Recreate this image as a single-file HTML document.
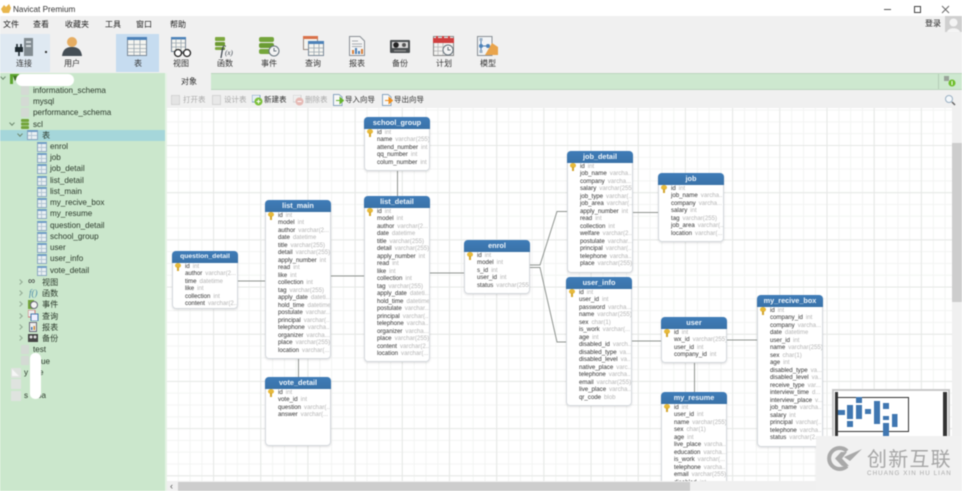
<!DOCTYPE html>
<html lang="zh"><head><meta charset="utf-8"><title>Navicat Premium</title>
<style>
html,body{margin:0;padding:0;width:962px;height:491px;overflow:hidden;background:#fff}
body{font-family:"Liberation Sans","Noto Sans CJK SC",sans-serif;color:#333}
#a{position:relative;width:962px;height:491px;overflow:hidden;filter:blur(.45px)}
.x{position:absolute}
.m{position:absolute;top:20px;font-size:8px;line-height:10px;color:#222}
.l{position:absolute;top:59px;width:44px;text-align:center;font-size:8px;line-height:10px;color:#333}
.ic{position:absolute;top:35px}
.s{position:absolute;font-size:8.1px;line-height:11px;color:#2c3a2c;white-space:nowrap}
.ti{position:absolute;left:37px;width:10px;height:10px;background:#e9f0f3;border:1px solid #8ba7c0;box-sizing:border-box;background-image:linear-gradient(#b5c6d5,#b5c6d5),linear-gradient(#b5c6d5,#b5c6d5);background-size:100% 1px,1px 100%;background-position:0 3px,3px 0;background-repeat:no-repeat;border-top:2px solid #6f9cc6}
.d{position:absolute;left:21px;width:8px;height:9px;background:#d4dad4}
.c{position:absolute;width:3px;height:3px;border-right:1.2px solid #6f8a70;border-bottom:1.2px solid #6f8a70;transform:rotate(45deg)}
.r{transform:rotate(-45deg);border-color:#93aa94}
.b{position:absolute;font-size:7.5px;line-height:10px;white-space:nowrap}
.g{color:#aaa}.k{color:#333}
.t{position:absolute;width:66px;background:#fff;box-sizing:border-box;border-radius:4px;overflow:hidden;box-shadow:inset 0 0 0 1px #d5d9dd,0 1px 2px rgba(0,0,0,.12)}
.t h4{margin:0;height:11.5px;line-height:11.5px;background:linear-gradient(#3f7cb8,#3a72a8);color:#eef5fb;font-size:7.3px;font-weight:bold;text-align:center}
.t p{margin:0 1px 0 0;padding-left:13px;height:7.5px;line-height:7.5px;font-size:6.1px;color:#333;white-space:nowrap;overflow:hidden}
.t p span{color:#b4b4b4;margin-left:3px}
.key{position:absolute;left:3px;top:11.5px;width:6px;height:5px;background:#e7b93a;border-radius:50%}
.key:after{content:"";position:absolute;left:2px;top:4px;width:2px;height:4px;background:#d3a52c}
</style></head><body><div id="a">

<!-- title bar -->
<div class="x" style="left:0;top:0;width:962px;height:16px;background:#fff"></div>
<svg class="x" style="left:0;top:3px" width="12" height="11"><path d="M1 6 L4 2 L6 4 L9 1 L11 5 L9 10 H3Z" fill="#e8b64c"/></svg>
<div class="x" style="left:13px;top:4px;font-size:8.2px;line-height:11px;color:#333">Navicat Premium</div>
<div class="x" style="left:884px;top:9px;width:7px;height:1px;background:#555"></div>
<div class="x" style="left:914px;top:6px;width:5px;height:5px;border:1px solid #444"></div>
<svg class="x" style="left:941px;top:5px" width="9" height="9"><path d="M1 1L8 8M8 1L1 8" stroke="#666" stroke-width=".9"/></svg>

<!-- menu + toolbar -->
<div class="x" style="left:0;top:16px;width:962px;height:57px;background:#f0f0f0"></div>
<div class="m" style="left:3px">文件</div><div class="m" style="left:33px">查看</div><div class="m" style="left:65px">收藏夹</div><div class="m" style="left:105px">工具</div><div class="m" style="left:136px">窗口</div><div class="m" style="left:170px">帮助</div>
<div class="x" style="left:925px;top:19px;font-size:8px;line-height:10px;color:#222">登录</div>
<div class="x" style="left:945px;top:16px;width:17px;height:16px;background:#cfcfcf"></div>
<svg class="x" style="left:945px;top:16px" width="17" height="16"><circle cx="8.5" cy="6.5" r="4" fill="#f4f4f4"/><path d="M2 16C3 11 14 11 15 16Z" fill="#f4f4f4"/></svg>

<div class="x" style="left:0;top:34px;width:50px;height:38px;background:#dfe9f2"></div>
<div class="x" style="left:116px;top:34px;width:43px;height:38px;background:#c6dcf0"></div>

<svg class="ic" style="left:13px" width="24" height="22"><rect x="11" y="3" width="9" height="18" fill="#808a90"/><rect x="13" y="6" width="5" height="2" fill="#cfd5d9"/><rect x="13" y="10" width="5" height="2" fill="#cfd5d9"/><path d="M2 12h8v5H2z" fill="#1f2a30"/><path d="M4 9v3M8 9v3M6 17v4" stroke="#1f2a30" stroke-width="1.6"/></svg>
<div class="x" style="left:45px;top:51px;width:2px;height:2px;background:#333"></div>
<svg class="ic" style="left:62px" width="20" height="22"><circle cx="10" cy="7" r="5" fill="#e6ad62"/><path d="M0 21C1 13 6 12 10 12S19 13 20 21Z" fill="#454e55"/></svg>
<svg class="ic" style="left:127px" width="21" height="21"><rect x=".5" y="2.500" width="19" height="18" fill="#f5f5f0" stroke="#7b8a99"/><rect x="0" y="2" width="20" height="3" fill="#4d82b8"/><path d="M1 9.500H19M1 13.500H19M1 17H19M7 5V20M13 5V20" stroke="#9aa6b0" stroke-width=".8"/></svg>
<svg class="ic" style="left:171px" width="22" height="23"><rect x=".5" y="2.500" width="14" height="14" fill="#f5f5f0" stroke="#7b8a99"/><rect x="0" y="2" width="15" height="2.500" fill="#4d82b8"/><path d="M1 8H14M1 12H14M5 4V16M10 4V16" stroke="#9aa6b0" stroke-width=".8"/><circle cx="7" cy="18" r="3.500" fill="#fff" stroke="#222" stroke-width="1.300"/><circle cx="16" cy="18" r="3.500" fill="#fff" stroke="#222" stroke-width="1.300"/><path d="M10 18h3" stroke="#222"/></svg>
<svg class="ic" style="left:214px" width="22" height="23"><rect x="1" y="2" width="10" height="4" rx="1" fill="#7da83e"/><rect x="1" y="7" width="10" height="4" rx="1" fill="#6d9a32"/><rect x="1" y="12" width="10" height="3" rx="1" fill="#7da83e"/><text x="6" y="21" font-family="Liberation Serif,serif" font-style="italic" font-size="15" fill="#39424a">f</text><text x="11" y="20" font-family="Liberation Serif,serif" font-style="italic" font-size="7" fill="#39424a">(x)</text></svg>
<svg class="ic" style="left:258px" width="22" height="22"><rect x="1" y="2" width="15" height="5" rx="2" fill="#74a53b"/><rect x="1" y="8" width="15" height="5" rx="2" fill="#6a9c32"/><rect x="1" y="14" width="15" height="5" rx="2" fill="#74a53b"/><circle cx="16" cy="16" r="5" fill="#f4f4f4" stroke="#67747d"/><path d="M16 13v3h2.500" stroke="#67747d" fill="none"/></svg>
<svg class="ic" style="left:303px" width="21" height="21"><rect x=".5" y="1.500" width="14" height="13" fill="#f5f5f0" stroke="#9a8a80"/><rect x="0" y="1" width="15" height="3" fill="#d9714a"/><rect x="5.500" y="6.500" width="15" height="14" fill="#f5f5f0" stroke="#7b8a99"/><rect x="5" y="6" width="16" height="3" fill="#4d82b8"/><path d="M6 13H20M6 17H20M11 9V20M16 9V20" stroke="#9aa6b0" stroke-width=".8"/></svg>
<svg class="ic" style="left:349px" width="16" height="22"><path d="M.5 1.500H11L15.500 6V20.500H.5Z" fill="#f4f4f4" stroke="#8a9096"/><path d="M3 6H9M3 9H13M3 11.500H13" stroke="#a8adb2"/><rect x="3" y="15" width="2" height="4" fill="#d8803c"/><rect x="6" y="13" width="2" height="6" fill="#4d82b8"/><rect x="9" y="16" width="2" height="3" fill="#4d82b8"/><rect x="12" y="14" width="2" height="5" fill="#d8803c"/></svg>
<svg class="ic" style="left:390px" width="21" height="20"><rect x="0" y="5" width="20" height="13" rx="1" fill="#4a4e50"/><rect x="2" y="7" width="16" height="6" fill="#dcdcdc"/><circle cx="6" cy="10" r="2.800" fill="#222"/><circle cx="14" cy="10" r="2" fill="#555"/><rect x="4" y="15" width="12" height="1.500" fill="#888"/></svg>
<svg class="ic" style="left:433px" width="22" height="22"><rect x=".5" y="1.500" width="20" height="19" fill="#f2f2f0" stroke="#888"/><rect x="0" y="3" width="21" height="5" fill="#cf3f3f"/><path d="M4 1v4M10 1v4M16 1v4" stroke="#cf3f3f" stroke-width="2"/><path d="M1 12H14M1 16H14M5 8V20M10 8V20" stroke="#b2b2b2" stroke-width=".7"/><circle cx="15" cy="15" r="5" fill="#f4f4f4" stroke="#67747d"/><path d="M15 12v3h2.500" stroke="#67747d" fill="none"/></svg>
<svg class="ic" style="left:477px" width="22" height="22"><path d="M.5 1.500H15V20.500H.5Z" fill="#f2f4f6" stroke="#8a9096"/><path d="M15 8L21 12V20H8Z" fill="#e9a44c"/><path d="M4 5V17M4 11H11" stroke="#4d82b8"/><circle cx="4" cy="11" r="2" fill="#4d82b8"/><circle cx="11" cy="11" r="2" fill="#4d82b8"/><rect x="2.500" y="3" width="3" height="3" fill="#9ab0c6"/><rect x="2.500" y="15" width="3" height="3" fill="#9ab0c6"/></svg>

<div class="l" style="left:2px">连接</div><div class="l" style="left:50px">用户</div><div class="l" style="left:116px">表</div><div class="l" style="left:159px">视图</div><div class="l" style="left:203px">函数</div><div class="l" style="left:247px">事件</div><div class="l" style="left:291px">查询</div><div class="l" style="left:335px">报表</div><div class="l" style="left:378px">备份</div><div class="l" style="left:422px">计划</div><div class="l" style="left:466px">模型</div>

<!-- sidebar -->
<div class="x" style="left:0;top:73px;width:165px;height:418px;background:#cbe7cc"></div>
<div class="x" style="left:165px;top:73px;width:2px;height:418px;background:#e6f3e6"></div>
<div class="x" style="left:0;top:130px;width:165px;height:11px;background:#a5d6da"></div>

<div class="c" style="left:1px;top:75px"></div>
<svg class="x" style="left:10px;top:74px" width="9" height="10"><path d="M0 0H9V2H3V10H0Z" fill="#5da52e"/><path d="M3 2L9 2L5 7Z" fill="#3f6f22"/></svg>

<div class="d" style="top:86px"></div><div class="s" style="left:33px;top:85px">information_schema</div>
<div class="d" style="top:97px"></div><div class="s" style="left:33px;top:96px">mysql</div>
<div class="d" style="top:108px"></div><div class="s" style="left:33px;top:107px">performance_schema</div>
<div class="c" style="left:10px;top:121px"></div>
<svg class="x" style="left:21px;top:119px" width="8" height="10"><rect width="8" height="3" rx="1" fill="#74a53b"/><rect y="3.500" width="8" height="3" rx="1" fill="#74a53b"/><rect y="7" width="8" height="3" rx="1" fill="#74a53b"/></svg>
<div class="s" style="left:33px;top:119px">scl</div>
<div class="c" style="left:18px;top:132px"></div>
<div class="ti" style="left:27px;top:130px;width:11px;height:10px"></div>
<div class="s" style="left:42px;top:130px">表</div>

<div class="ti" style="top:142px"></div><div class="s" style="left:50px;top:141px">enrol</div>
<div class="ti" style="top:153px"></div><div class="s" style="left:50px;top:152px">job</div>
<div class="ti" style="top:164px"></div><div class="s" style="left:50px;top:163px">job_detail</div>
<div class="ti" style="top:176px"></div><div class="s" style="left:50px;top:175px">list_detail</div>
<div class="ti" style="top:187px"></div><div class="s" style="left:50px;top:186px">list_main</div>
<div class="ti" style="top:198px"></div><div class="s" style="left:50px;top:197px">my_recive_box</div>
<div class="ti" style="top:209px"></div><div class="s" style="left:50px;top:208px">my_resume</div>
<div class="ti" style="top:221px"></div><div class="s" style="left:50px;top:220px">question_detail</div>
<div class="ti" style="top:232px"></div><div class="s" style="left:50px;top:231px">school_group</div>
<div class="ti" style="top:243px"></div><div class="s" style="left:50px;top:242px">user</div>
<div class="ti" style="top:254px"></div><div class="s" style="left:50px;top:253px">user_info</div>
<div class="ti" style="top:266px"></div><div class="s" style="left:50px;top:265px">vote_detail</div>

<div class="c r" style="left:18px;top:280px"></div><div class="x" style="left:28px;top:276px;font-size:10px;line-height:11px;color:#333">∞</div><div class="s" style="left:42px;top:277px">视图</div>
<div class="c r" style="left:18px;top:291px"></div><div class="x" style="left:29px;top:288px;font:italic 9px/11px 'Liberation Serif',serif;color:#4c8aa8">f()</div><div class="s" style="left:42px;top:288px">函数</div>
<div class="c r" style="left:18px;top:302px"></div><svg class="x" style="left:28px;top:300px" width="10" height="9"><rect width="6" height="9" fill="#74a53b"/><circle cx="6" cy="5" r="3.500" fill="#f4f4f4" stroke="#667"/></svg><div class="s" style="left:42px;top:299px">事件</div>
<div class="c r" style="left:18px;top:314px"></div><svg class="x" style="left:28px;top:310px" width="11" height="11"><rect width="7" height="7" fill="#eee" stroke="#c77"/><rect x="3" y="4" width="7" height="7" fill="#eef" stroke="#47a"/></svg><div class="s" style="left:42px;top:311px">查询</div>
<div class="c r" style="left:18px;top:325px"></div><svg class="x" style="left:29px;top:322px" width="8" height="10"><rect x=".5" y=".5" width="7" height="9" fill="#eee" stroke="#667"/><rect x="2" y="5" width="1.500" height="3" fill="#47a"/><rect x="4.500" y="4" width="1.500" height="4" fill="#c83"/></svg><div class="s" style="left:42px;top:322px">报表</div>
<div class="c r" style="left:18px;top:336px"></div><svg class="x" style="left:28px;top:334px" width="10" height="8"><rect width="10" height="8" fill="#444"/><circle cx="3" cy="3" r="1.500" fill="#ddd"/><circle cx="7" cy="3" r="1.500" fill="#ddd"/></svg><div class="s" style="left:42px;top:333px">备份</div>

<div class="d" style="top:345px"></div><div class="s" style="left:33px;top:344px">test</div>
<div class="d" style="top:356px"></div><div class="s" style="left:41px;top:356px">ue</div>
<svg class="x" style="left:11px;top:368px" width="10" height="10"><rect width="10" height="10" fill="#dfe3df"/><path d="M1 1L8 8H1Z" fill="#f6f6f6"/></svg><div class="s" style="left:24px;top:367px">y</div><div class="s" style="left:39px;top:367px">e</div>
<div class="x" style="left:11px;top:379px;width:10px;height:10px;background:#dfe3df"></div>
<div class="x" style="left:11px;top:391px;width:10px;height:10px;background:#dfe3df"></div><div class="s" style="left:24px;top:390px">s</div><div class="s" style="left:37px;top:390px">oa</div>
<div class="x" style="left:16px;top:74px;width:58px;height:12px;background:#fff;border-radius:6px"></div>
<div class="x" style="left:30px;top:353px;width:11px;height:46px;background:#fff;border-radius:5px"></div>

<!-- tab strip -->
<div class="x" style="left:167px;top:73px;width:795px;height:17px;background:#cde8cf;border-top:1px solid #bcd6be;border-bottom:1px solid #bcd6be;box-sizing:border-box"></div>
<div class="x" style="left:167px;top:73px;width:44px;height:17px;background:#f0f0f0;text-align:center;font-size:8px;line-height:17px;color:#333">对象</div>
<div class="x" style="left:938px;top:74px;width:1px;height:15px;background:#b5ccb7"></div>
<svg class="x" style="left:943px;top:75px" width="14" height="13"><rect x="1" y="1" width="5" height="5" fill="#9aa39a"/><circle cx="9" cy="8" r="3.500" fill="#6fbf2e"/><path d="M9 6v4" stroke="#fff"/></svg>

<!-- object toolbar -->
<div class="x" style="left:167px;top:90px;width:795px;height:18px;background:#f0f0f0"></div>
<div class="x" style="left:171px;top:95px;width:9px;height:10px;background:#e4e4e4;border:1px solid #d4d4d4;box-sizing:border-box"></div>
<div class="b g" style="left:183px;top:95px">打开表</div>
<div class="x" style="left:212px;top:95px;width:9px;height:10px;background:#e8e8e8;border:1px solid #d4d4d4;box-sizing:border-box"></div>
<div class="b g" style="left:224px;top:95px">设计表</div>
<svg class="x" style="left:252px;top:95px" width="11" height="11"><rect x="0" y="0" width="8" height="7" fill="#e6eef5" stroke="#6d94b8" stroke-width=".8"/><circle cx="6.500" cy="6.500" r="4" fill="#7cc03a"/><path d="M6.500 4.500v4M4.500 6.500h4" stroke="#fff"/></svg>
<div class="b k" style="left:264px;top:95px">新建表</div>
<svg class="x" style="left:293px;top:95px" width="11" height="11"><rect x="0" y="0" width="8" height="7" fill="#eee" stroke="#ccc" stroke-width=".8"/><circle cx="6.500" cy="6.500" r="4" fill="#e6b9b4"/><path d="M4.500 6.500h4" stroke="#fff"/></svg>
<div class="b g" style="left:305px;top:95px">删除表</div>
<svg class="x" style="left:333px;top:94px" width="11" height="12"><path d="M.5 .5H6L9 3V11.500H.5Z" fill="#f8f8f8" stroke="#8aa6c0"/><path d="M3 6.500H10M7 3.500L10.500 6.500L7 9.500Z" fill="#67b52e" stroke="#67b52e"/></svg>
<div class="b k" style="left:345px;top:95px">导入向导</div>
<svg class="x" style="left:382px;top:94px" width="11" height="12"><path d="M.5 .5H6L9 3V11.500H.5Z" fill="#f8f8f8" stroke="#8aa6c0"/><path d="M3 6.500H10M7 3.500L10.500 6.500L7 9.500Z" fill="#ee8f1f" stroke="#ee8f1f"/></svg>
<div class="b k" style="left:394px;top:95px">导出向导</div>
<svg class="x" style="left:944px;top:94px" width="12" height="12"><circle cx="5" cy="5" r="3.500" fill="#f4f8fb" stroke="#9bb1c4"/><path d="M8 8L11 11" stroke="#666" stroke-width="1.500"/></svg>

<!-- canvas -->
<div class="x" style="left:167px;top:108px;width:785px;height:373px;background-color:#fff;background-image:linear-gradient(#e6e8e6 1px,transparent 1px),linear-gradient(90deg,#e6e8e6 1px,transparent 1px),linear-gradient(#f3f4f3 1px,transparent 1px),linear-gradient(90deg,#f3f4f3 1px,transparent 1px);background-size:47.2px 47.2px,47.2px 47.2px,11.8px 11.8px,11.8px 11.8px;background-position:0 37px,46px 0,0 1.600px,10.800px 0"></div>

<svg class="x" style="left:0;top:0" width="962" height="491" fill="none" stroke="#8f9490" stroke-width="1">
<path d="M238 281H265M331 276H364M430 273H464M397.500 171V196M298.500 359V377M530 265H540L557 211.500H567M530 267.500H540L557 342H566M633 212.500H658M632 341H661M727 340H757M694.500 363V392"/>
</svg>

<!-- tables -->
<div class="t" style="left:364px;top:117px;height:54px"><h4>school_group</h4><i class="key"></i><p>id<span>int</span></p><p>name<span>varchar(255)</span></p><p>attend_number<span>int</span></p><p>qq_number<span>int</span></p><p>colum_number<span>int</span></p></div>

<div class="t" style="left:172px;top:251px;height:58px"><h4 style="font-size:6.8px">question_detail</h4><i class="key"></i><p>id<span>int</span></p><p>author<span>varchar(2...</span></p><p>time<span>datetime</span></p><p>like<span>int</span></p><p>collection<span>int</span></p><p>content<span>varchar(2...</span></p></div>

<div class="t" style="left:265px;top:200px;height:159px"><h4>list_main</h4><i class="key"></i><p>id<span>int</span></p><p>model<span>int</span></p><p>author<span>varchar(2...</span></p><p>date<span>datetime</span></p><p>title<span>varchar(255)</span></p><p>detail<span>varchar(255)</span></p><p>apply_number<span>int</span></p><p>read<span>int</span></p><p>like<span>int</span></p><p>collection<span>int</span></p><p>tag<span>varchar(255)</span></p><p>apply_date<span>dateti...</span></p><p>hold_time<span>datetime</span></p><p>postulate<span>varchar...</span></p><p>principal<span>varchar(...</span></p><p>telephone<span>varcha...</span></p><p>organizer<span>varcha...</span></p><p>place<span>varchar(255)</span></p><p>location<span>varchar(...</span></p></div>

<div class="t" style="left:364px;top:196px;height:166px"><h4>list_detail</h4><i class="key"></i><p>id<span>int</span></p><p>model<span>int</span></p><p>author<span>varchar(2...</span></p><p>date<span>datetime</span></p><p>title<span>varchar(255)</span></p><p>detail<span>varchar(255)</span></p><p>apply_number<span>int</span></p><p>read<span>int</span></p><p>like<span>int</span></p><p>collection<span>int</span></p><p>tag<span>varchar(255)</span></p><p>apply_date<span>dateti...</span></p><p>hold_time<span>datetime</span></p><p>postulate<span>varchar...</span></p><p>principal<span>varchar(...</span></p><p>telephone<span>varcha...</span></p><p>organizer<span>varcha...</span></p><p>place<span>varchar(255)</span></p><p>content<span>varchar(2...</span></p><p>location<span>varchar(...</span></p></div>

<div class="t" style="left:265px;top:377px;height:69px"><h4>vote_detail</h4><i class="key"></i><p>id<span>int</span></p><p>vote_id<span>int</span></p><p>question<span>varchar(...</span></p><p>answer<span>varchar(...</span></p></div>

<div class="t" style="left:464px;top:240px;height:54px"><h4>enrol</h4><i class="key"></i><p>id<span>int</span></p><p>model<span>int</span></p><p>s_id<span>int</span></p><p>user_id<span>int</span></p><p>status<span>varchar(255)</span></p></div>

<div class="t" style="left:567px;top:151px;height:122px"><h4>job_detail</h4><i class="key"></i><p>id<span>int</span></p><p>job_name<span>varcha...</span></p><p>company<span>varcha...</span></p><p>salary<span>varchar(255)</span></p><p>job_type<span>varchar(...</span></p><p>job_area<span>varchar(...</span></p><p>apply_number<span>int</span></p><p>read<span>int</span></p><p>collection<span>int</span></p><p>welfare<span>varchar(2...</span></p><p>postulate<span>varchar...</span></p><p>principal<span>varchar(...</span></p><p>telephone<span>varcha...</span></p><p>place<span>varchar(255)</span></p></div>

<div class="t" style="left:658px;top:173px;height:69px"><h4>job</h4><i class="key"></i><p>id<span>int</span></p><p>job_name<span>varcha...</span></p><p>company<span>varcha...</span></p><p>salary<span>int</span></p><p>tag<span>varchar(255)</span></p><p>job_area<span>varchar(...</span></p><p>location<span>varchar(...</span></p></div>

<div class="t" style="left:566px;top:277px;height:129px"><h4>user_info</h4><i class="key"></i><p>id<span>int</span></p><p>user_id<span>int</span></p><p>password<span>varcha...</span></p><p>name<span>varchar(255)</span></p><p>sex<span>char(1)</span></p><p>is_work<span>varchar(...</span></p><p>age<span>int</span></p><p>disabled_id<span>varch...</span></p><p>disabled_type<span>va...</span></p><p>disabled_level<span>va...</span></p><p>native_place<span>varc...</span></p><p>telephone<span>varcha...</span></p><p>email<span>varchar(255)</span></p><p>live_place<span>varcha...</span></p><p>qr_code<span>blob</span></p></div>

<div class="t" style="left:661px;top:317px;height:46px"><h4>user</h4><i class="key"></i><p>id<span>int</span></p><p>wx_id<span>varchar(255)</span></p><p>user_id<span>int</span></p><p>company_id<span>int</span></p></div>

<div class="t" style="left:661px;top:392px;height:110px"><h4>my_resume</h4><i class="key"></i><p>id<span>int</span></p><p>user_id<span>int</span></p><p>name<span>varchar(255)</span></p><p>sex<span>char(1)</span></p><p>age<span>int</span></p><p>live_place<span>varcha...</span></p><p>education<span>varcha...</span></p><p>is_work<span>varchar(...</span></p><p>telephone<span>varcha...</span></p><p>email<span>varchar(255)</span></p><p>disabled<span>int</span></p></div>

<div class="t" style="left:757px;top:295px;height:152px"><h4>my_recive_box</h4><i class="key"></i><p>id<span>int</span></p><p>company_id<span>int</span></p><p>company<span>varcha...</span></p><p>date<span>datetime</span></p><p>user_id<span>int</span></p><p>name<span>varchar(255)</span></p><p>sex<span>char(1)</span></p><p>age<span>int</span></p><p>disabled_type<span>va...</span></p><p>disabled_level<span>va...</span></p><p>receive_type<span>var...</span></p><p>interview_time<span>d...</span></p><p>interview_place<span>v...</span></p><p>job_name<span>varcha...</span></p><p>salary<span>int</span></p><p>principal<span>varchar(...</span></p><p>telephone<span>varcha...</span></p><p>status<span>varchar(2...</span></p></div>

<!-- scrollbars -->
<div class="x" style="left:952px;top:108px;width:10px;height:383px;background:#f0f0f0"></div>
<div class="x" style="left:952px;top:143px;width:10px;height:159px;background:#cdcdcd"></div>
<div class="x" style="left:167px;top:481px;width:795px;height:10px;background:#f0f0f0"></div>
<div class="x" style="left:178px;top:482px;width:512px;height:9px;background:#cdcdcd"></div>
<div class="x" style="left:170px;top:481px;font-size:9px;line-height:10px;color:#555">‹</div>

<!-- minimap -->
<div class="x" style="left:832px;top:389px;width:118px;height:60px;background:#fff;border:2px solid #c9c9c9;box-sizing:border-box"></div>
<svg class="x" style="left:832px;top:389px" width="118" height="60">
<rect x="3" y="3" width="3" height="57" fill="#333"/><rect x="111" y="3" width="4" height="57" fill="#333"/>
<rect x="5.500" y="8.500" width="71" height="34" fill="none" stroke="#333"/>
<g fill="#4077b1"><rect x="6" y="21" width="7" height="5"/><rect x="15" y="16" width="6" height="14"/><rect x="15" y="32" width="6" height="6"/><rect x="24" y="16" width="6" height="14"/><rect x="24" y="8" width="6" height="6"/><rect x="33" y="20" width="6" height="5"/><rect x="42" y="12" width="6" height="23"/><rect x="51" y="14" width="6" height="6"/><rect x="51" y="27" width="6" height="4"/><rect x="51" y="34" width="6" height="13"/><rect x="60" y="25" width="5.500" height="13"/></g>
</svg>

<!-- watermark -->
<div class="x" style="left:816px;top:436px;width:146px;height:55px;background:#f1f1f1"></div>
<svg class="x" style="left:826px;top:446px" width="38" height="26"><path d="M21 5A10.500 10.500 0 1 0 21 20" fill="none" stroke="#a9a9a9" stroke-width="4"/><path d="M9 12.500L15 6H21L16 12.500L23 20H16ZM18 11L36 3L24 15Z" fill="#a9a9a9"/></svg>
<div class="x" style="left:867px;top:449px;font-size:20px;line-height:23px;color:#a6a6a6;letter-spacing:1.200px;white-space:nowrap">创新互联</div>
<div class="x" style="left:867px;top:470px;font-size:6.2px;line-height:8px;color:#a9a9a9;letter-spacing:1.100px;white-space:nowrap">CHUANG XIN HU LIAN</div>

</div></body></html>
